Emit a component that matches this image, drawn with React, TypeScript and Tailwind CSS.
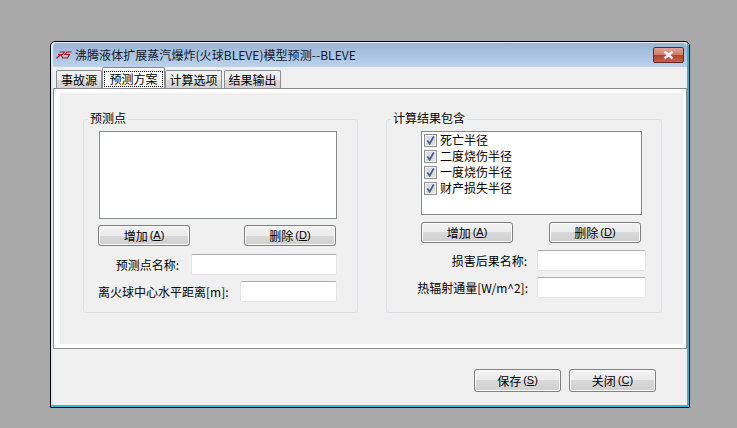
import React from "react";

const FONT = "font-['Noto_Sans_CJK_SC','Liberation_Sans',sans-serif]";

function Btn({ label, keyName, w = "w-[92px]", h = "h-[21px]" }: { label: string; keyName: string; w?: string; h?: string }) {
  return (
    <div className={`${w} ${h} flex items-center justify-center rounded-[3px] border border-[#7f7f7f] bg-[linear-gradient(#f2f2f2_0%,#ebebeb_50%,#d9d9d9_50%,#cfcfcf_100%)] text-[12px] leading-none text-black shadow-[inset_0_0_0_1px_#fbfbfb]`}>
      <span>{label}</span>
      <span className="ml-[2px] font-['Liberation_Sans',sans-serif] text-[11px]">
        (<span className="underline">{keyName}</span>)
      </span>
    </div>
  );
}

function Field({ label, inputW, labelW }: { label: string; inputW: string; labelW: string }) {
  return (
    <div className="flex h-[21px] items-center">
      <div className={`${labelW} whitespace-nowrap text-right text-[12px] leading-none text-black`}>{label}</div>
      <div className={`${inputW} ml-auto h-[21px] rounded-[2px] border border-[#e2e6ea] border-t-[#abadb3] bg-white`} />
    </div>
  );
}

function Check({ label }: { label: string }) {
  return (
    <div className="flex h-[16px] items-center gap-[3px]">
      <div className="flex h-[13px] w-[13px] items-center justify-center border border-[#8e8f8f] bg-[#dcdcdc] shadow-[inset_0_0_0_1px_#f4f4f4]">
        <svg width="11" height="11" viewBox="0 0 11 11">
          <path d="M2.4 5.5 L4.6 8.8 L8.8 1.4" fill="none" stroke="#4a5f9e" strokeWidth="1.8" />
        </svg>
      </div>
      <span className="text-[12px] leading-none text-black">{label}</span>
    </div>
  );
}

function Group({ title, w, children }: { title: string; w: string; children: React.ReactNode }) {
  return (
    <div className={`relative ${w} h-[194px] rounded-[3px] border border-[#dbe1e8]`}>
      <div className="absolute left-[4px] top-[-9px] bg-[#f0f0f0] px-[2px] text-[12px] leading-[14px] text-black">{title}</div>
      {children}
    </div>
  );
}

function Tab({ label, active, w }: { label: string; active?: boolean; w: string }) {
  if (active) {
    return (
      <div className={`${w} z-10 flex h-[21px] items-center justify-center rounded-t-[2px] border border-b-0 border-[#8a8d92] bg-white pt-[1px]`}>
        <span className="flex h-[16px] w-[59px] items-center justify-center border border-dotted border-black text-[12px] leading-none text-black">{label}</span>
      </div>
    );
  }
  return (
    <div className={`${w} mt-[2px] flex h-[18px] items-center justify-center rounded-t-[2px] border border-b-0 border-[#8a8d92] bg-[linear-gradient(#f2f2f2_0%,#ebebeb_50%,#d9d9d9_50%,#d2d2d2_100%)] text-[12px] leading-none text-black`}>
      {label}
    </div>
  );
}

export default function App() {
  return (
    <div className={`${FONT} h-[428px] w-[737px] overflow-hidden bg-[#a9a9a9] pl-[50px] pt-[41px]`}>
      <div className="flex h-[367px] w-[640px] flex-col rounded-t-[5px] border border-black bg-[#f0f0f0] shadow-[inset_-2px_-2px_0_#2ab8e0,inset_2px_0_0_#dce9f5]">
        {/* title bar */}
        <div className="mx-[2px] mt-[1px] flex h-[24px] items-center rounded-t-[4px] bg-[linear-gradient(#9ab5d4,#bad2ec)] pl-[3px] pr-[3px]">
          <svg width="16" height="9" viewBox="0 0 16 9" className="mr-[3px]">
            <path d="M3.5 1 H8.5 L6.5 3.5 H2 M4.5 3.5 L0.5 7.5 M5 4 L7 7.5 M15.5 1 H11 L9 3.5 H13.5 L11.5 7 H7" fill="none" stroke="#b01822" strokeWidth="1.2" />
          </svg>
          <span className="text-[12px] leading-none tracking-[0.05px] text-[#10182a]">沸腾液体扩展蒸汽爆炸(火球BLEVE)模型预测--BLEVE</span>
          <div className="ml-auto flex h-[16px] w-[31px] items-center justify-center rounded-[2px] border border-[#5c2b2b] bg-[linear-gradient(#e3a397_0%,#d07a6c_50%,#b8402c_52%,#c8604c_100%)]">
            <svg width="13" height="10" viewBox="0 0 13 10">
              <path d="M2.5 1.5 L10.5 8.5 M10.5 1.5 L2.5 8.5" stroke="#f0f0f0" strokeWidth="2.6" />
            </svg>
          </div>
        </div>

        {/* tabs */}
        <div className="ml-[5px] mt-[1px] flex h-[20px] items-end">
          <Tab label="事故源" w="w-[46px]" />
          <Tab label="预测方案" active w="w-[63px]" />
          <Tab label="计算选项" w="w-[57px]" />
          <div className="w-[2px]" />
          <Tab label="结果输出" w="w-[57px]" />
        </div>

        {/* panel */}
        <div className="mx-[2px] h-[261px] border border-[#8a8d92] bg-white pb-[4px] pl-[6px] pr-[3px] pt-[4px]">
          <div className="flex h-full gap-[28px] bg-[#f0f0f0] pl-[23px] pt-[26px]">
            <Group title="预测点" w="w-[275px]">
              <div className="pl-[15px] pr-[20px] pt-[11px]">
                <div className="h-[88px] w-[238px] border border-[#858a90] bg-white" />
                <div className="ml-[-1px] mt-[6px] flex justify-between pr-[1px]">
                  <Btn label="增加" keyName="A" />
                  <Btn label="删除" keyName="D" />
                </div>
                <div className="mt-[8px]">
                  <Field label="预测点名称:" labelW="w-[70px] ml-[10px]" inputW="w-[146px]" />
                </div>
                <div className="mt-[6px]">
                  <Field label="离火球中心水平距离[m]:" labelW="w-[130px] ml-[-1px]" inputW="w-[97px]" />
                </div>
              </div>
            </Group>
            <Group title="计算结果包含" w="w-[276px]">
              <div className="pl-[34px] pr-[15px] pt-[11px]">
                <div className="h-[84px] w-[221px] border border-[#858a90] bg-white pl-[2px]">
                  <Check label="死亡半径" />
                  <Check label="二度烧伤半径" />
                  <Check label="一度烧伤半径" />
                  <Check label="财产损失半径" />
                </div>
                <div className="mt-[7px] flex w-[220px] justify-between">
                  <Btn label="增加" keyName="A" />
                  <Btn label="删除" keyName="D" />
                </div>
                <div className="mt-[7px]">
                  <Field label="损害后果名称:" labelW="w-[80px] ml-[26px]" inputW="w-[109px]" />
                </div>
                <div className="mt-[6px]">
                  <Field label="热辐射通量[W/m^2]:" labelW="w-[112px] ml-[-5px]" inputW="w-[109px]" />
                </div>
              </div>
            </Group>
          </div>
        </div>

        {/* footer */}
        <div className="flex justify-end gap-[8px] pr-[33px] pt-[20px]">
          <Btn label="保存" keyName="S" w="w-[87px]" h="h-[23px]" />
          <Btn label="关闭" keyName="C" w="w-[87px]" h="h-[23px]" />
        </div>
      </div>
    </div>
  );
}
